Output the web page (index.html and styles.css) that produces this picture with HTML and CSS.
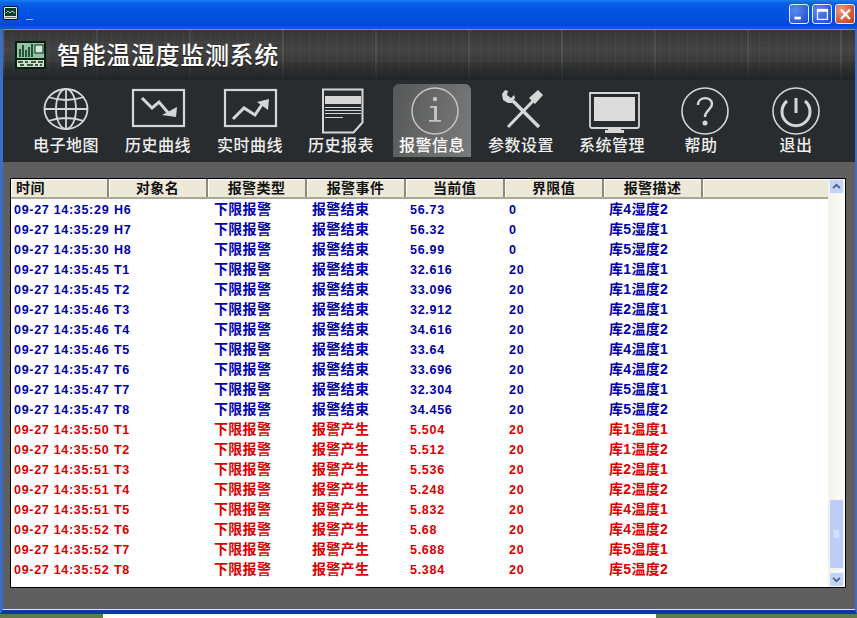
FILE: index.html
```html
<!DOCTYPE html>
<html lang="zh">
<head>
<meta charset="utf-8">
<title>智能温湿度监测系统</title>
<link rel="stylesheet" href="styles.css">
</head>
<body>
<div class="window">
  <div class="titlebar">
    <svg class="app-icon" viewBox="0 0 15 14"><rect x=".5" y=".5" width="14" height="13" rx="1.5" fill="#dfe8e0" stroke="#111"/><rect x="2" y="2" width="11" height="8" fill="#0d3a2c"/><path d="M3 7l2-2 2 2 2-2 3 2" fill="none" stroke="#9fe0b0"/><rect x="2" y="11" width="11" height="1" fill="#777"/></svg>
    <span class="title-text">_</span>
    <div class="win-buttons">
      <span class="win-btn"><svg viewBox="0 0 20 20"><rect x="5" y="13" width="7" height="3" fill="#fff"/></svg></span>
      <span class="win-btn"><svg viewBox="0 0 20 20"><rect x="5" y="5" width="11" height="11" fill="none" stroke="#fff" stroke-width="1.4"/><rect x="5" y="5" width="11" height="2.5" fill="#fff"/></svg></span>
      <span class="win-btn close"><svg viewBox="0 0 20 20"><path d="M5.5 5l10 10.500M15.500 5l-10 10.500" stroke="#fff" stroke-width="2.400" fill="none"/></svg></span>
    </div>
  </div>
  <div class="client">
    <header class="banner">
      <svg class="logo" viewBox="0 0 31 28">
        <rect width="31" height="28" fill="#06200f"/>
        <rect x="2" y="2" width="27" height="15" fill="#8fc4a4"/>
        <path d="M5 16V8M8 16V4M11 16V9M14 16V6M17 16V3" stroke="#0a2c18" stroke-width="1.500"/>
        <rect x="20" y="4" width="8" height="8" fill="#d6e8d8" stroke="#0a2c18"/>
        <rect x="2" y="19" width="27" height="7" fill="#cfe0c8"/>
        <path d="M3 21h5M10 21h3M16 21h5M23 21h5M5 24h4M12 24h6M20 24h3M25 24h2" stroke="#0a2c18" stroke-width="1.500"/>
      </svg>
      <h1 class="app-name">智能温湿度监测系统</h1>
    </header>
    <nav class="toolbar">
      <div class="tool">
        <svg class="ico" viewBox="0 0 60 50"><g fill="none" stroke="#d6d6d6" stroke-width="1.800"><ellipse cx="30" cy="23" rx="21.500" ry="20"/><ellipse cx="30" cy="23" rx="10" ry="20"/><path d="M30 3v40M8.500 23h43M12 11q18 6 36 0M12 35q18-6 36 0"/></g></svg>
        <span class="tool-label">电子地图</span>
      </div>
      <div class="tool">
        <svg class="ico" viewBox="0 0 60 50"><rect x="5" y="4" width="51" height="36" fill="none" stroke="#d6d6d6" stroke-width="2.200"/><path d="M14 12l10 10 7-6 11 13" fill="none" stroke="#d6d6d6" stroke-width="3"/><path d="M49 21l-1 10-14-2z" fill="#d6d6d6"/></svg>
        <span class="tool-label">历史曲线</span>
      </div>
      <div class="tool">
        <svg class="ico" viewBox="0 0 60 50"><rect x="5" y="4" width="51" height="36" fill="none" stroke="#d6d6d6" stroke-width="2.200"/><path d="M13 33l11-11 11 7 8-12" fill="none" stroke="#d6d6d6" stroke-width="3"/><path d="M49 13l-1 11-11-8z" fill="#d6d6d6"/></svg>
        <span class="tool-label">实时曲线</span>
      </div>
      <div class="tool">
        <svg class="ico" viewBox="0 0 60 50"><path d="M12 3.500h39.500v33l-9 10H12z" fill="none" stroke="#d6d6d6" stroke-width="2"/><rect x="14" y="10" width="36" height="8" fill="#d6d6d6"/><path d="M14 21.500h36M14 24.500h36M14 27.500h36" stroke="#d6d6d6"/><path d="M14 31.500h18" stroke="#d6d6d6"/></svg>
        <span class="tool-label">历史报表</span>
      </div>
      <div class="tool active">
        <svg class="ico" viewBox="0 0 60 50"><circle cx="33" cy="25" r="23" fill="none" stroke="#c4c4c4" stroke-width="1.500"/><circle cx="33" cy="13" r="2.200" fill="#c4c4c4"/><path d="M28 20h7v14h4v1.800H27V34h5V21.800h-4z" fill="#c4c4c4"/></svg>
        <span class="tool-label">报警信息</span>
      </div>
      <div class="tool">
        <svg class="ico" viewBox="0 0 60 50"><path d="M17 41L42 15" stroke="#d6d6d6" stroke-width="3"/><path d="M38 12l9-8 5 5-8 9z" fill="#d6d6d6"/><path d="M48 41L22 15" stroke="#d6d6d6" stroke-width="3.500"/><path d="M17 5l-1 4 4 3 3-3 1 3-3 5-4 0-5-3-1-6 3-4z" fill="#d6d6d6"/></svg>
        <span class="tool-label">参数设置</span>
      </div>
      <div class="tool">
        <svg class="ico" viewBox="0 0 60 50"><path d="M8 7h49v33a2 2 0 0 1-2 2H10a2 2 0 0 1-2-2z" fill="none" stroke="#d6d6d6" stroke-width="1.800"/><rect x="12" y="11" width="41" height="24" fill="#dcdcdc"/><path d="M26 42h13v2h3v3H23v-3h3z" fill="#d6d6d6"/></svg>
        <span class="tool-label">系统管理</span>
      </div>
      <div class="tool">
        <svg class="ico" viewBox="0 0 60 50"><circle cx="34" cy="25" r="23" fill="none" stroke="#d6d6d6" stroke-width="1.600"/><path d="M27 19c0-9 14-9 14-1 0 6-7 6-7 13" fill="none" stroke="#d6d6d6" stroke-width="2.400"/><circle cx="34" cy="37" r="2.500" fill="#d6d6d6"/></svg>
        <span class="tool-label">帮助</span>
      </div>
      <div class="tool">
        <svg class="ico" viewBox="0 0 60 50"><circle cx="30" cy="25" r="23" fill="none" stroke="#d6d6d6" stroke-width="1.600"/><path d="M21 15a14 14 0 1 0 18 0" fill="none" stroke="#d6d6d6" stroke-width="3"/><path d="M30 12v15" stroke="#d6d6d6" stroke-width="3"/></svg>
        <span class="tool-label">退出</span>
      </div>
    </nav>
    <main class="content">
      <section class="list">
        <div class="list-main">
          <div class="list-head">
            <span class="hc first">时间</span><span class="hc">对象名</span><span class="hc">报警类型</span><span class="hc">报警事件</span><span class="hc">当前值</span><span class="hc">界限值</span><span class="hc">报警描述</span><span class="hc rest"></span>
          </div>
          <div class="rows">
            <div class="row end"><span>09-27 14:35:29</span><span>H6</span><span>下限报警</span><span>报警结束</span><span>56.73</span><span>0</span><span>库4湿度2</span></div>
            <div class="row end"><span>09-27 14:35:29</span><span>H7</span><span>下限报警</span><span>报警结束</span><span>56.32</span><span>0</span><span>库5湿度1</span></div>
            <div class="row end"><span>09-27 14:35:30</span><span>H8</span><span>下限报警</span><span>报警结束</span><span>56.99</span><span>0</span><span>库5湿度2</span></div>
            <div class="row end"><span>09-27 14:35:45</span><span>T1</span><span>下限报警</span><span>报警结束</span><span>32.616</span><span>20</span><span>库1温度1</span></div>
            <div class="row end"><span>09-27 14:35:45</span><span>T2</span><span>下限报警</span><span>报警结束</span><span>33.096</span><span>20</span><span>库1温度2</span></div>
            <div class="row end"><span>09-27 14:35:46</span><span>T3</span><span>下限报警</span><span>报警结束</span><span>32.912</span><span>20</span><span>库2温度1</span></div>
            <div class="row end"><span>09-27 14:35:46</span><span>T4</span><span>下限报警</span><span>报警结束</span><span>34.616</span><span>20</span><span>库2温度2</span></div>
            <div class="row end"><span>09-27 14:35:46</span><span>T5</span><span>下限报警</span><span>报警结束</span><span>33.64</span><span>20</span><span>库4温度1</span></div>
            <div class="row end"><span>09-27 14:35:47</span><span>T6</span><span>下限报警</span><span>报警结束</span><span>33.696</span><span>20</span><span>库4温度2</span></div>
            <div class="row end"><span>09-27 14:35:47</span><span>T7</span><span>下限报警</span><span>报警结束</span><span>32.304</span><span>20</span><span>库5温度1</span></div>
            <div class="row end"><span>09-27 14:35:47</span><span>T8</span><span>下限报警</span><span>报警结束</span><span>34.456</span><span>20</span><span>库5温度2</span></div>
            <div class="row start"><span>09-27 14:35:50</span><span>T1</span><span>下限报警</span><span>报警产生</span><span>5.504</span><span>20</span><span>库1温度1</span></div>
            <div class="row start"><span>09-27 14:35:50</span><span>T2</span><span>下限报警</span><span>报警产生</span><span>5.512</span><span>20</span><span>库1温度2</span></div>
            <div class="row start"><span>09-27 14:35:51</span><span>T3</span><span>下限报警</span><span>报警产生</span><span>5.536</span><span>20</span><span>库2温度1</span></div>
            <div class="row start"><span>09-27 14:35:51</span><span>T4</span><span>下限报警</span><span>报警产生</span><span>5.248</span><span>20</span><span>库2温度2</span></div>
            <div class="row start"><span>09-27 14:35:51</span><span>T5</span><span>下限报警</span><span>报警产生</span><span>5.832</span><span>20</span><span>库4温度1</span></div>
            <div class="row start"><span>09-27 14:35:52</span><span>T6</span><span>下限报警</span><span>报警产生</span><span>5.68</span><span>20</span><span>库4温度2</span></div>
            <div class="row start"><span>09-27 14:35:52</span><span>T7</span><span>下限报警</span><span>报警产生</span><span>5.688</span><span>20</span><span>库5温度1</span></div>
            <div class="row start"><span>09-27 14:35:52</span><span>T8</span><span>下限报警</span><span>报警产生</span><span>5.384</span><span>20</span><span>库5温度2</span></div>
          </div>
        </div>
        <div class="scrollbar">
          <span class="sb-btn"><svg viewBox="0 0 15 15"><path d="M3.500 9.500l4-4 4 4" fill="none" stroke="#4d6185" stroke-width="2"/></svg></span>
          <span class="sb-track"></span>
          <span class="sb-thumb"><svg viewBox="0 0 13 8"><path d="M3.500 1h6M3.500 3h6M3.500 5h6M3.500 7h6" stroke="#eef3fd"/></svg></span>
          <span class="sb-btn"><svg viewBox="0 0 15 15"><path d="M3.500 5.500l4 4 4-4" fill="none" stroke="#4d6185" stroke-width="2"/></svg></span>
        </div>
      </section>
    </main>
  </div>
  <div class="desktop-strip"><span class="grass left"></span><span class="paper"></span><span class="grass"></span></div>
</div>
</body>
</html>
```

FILE: styles.css
```css
* { box-sizing: border-box; }
html, body { margin: 0; padding: 0; }
body { width: 857px; height: 618px; overflow: hidden; background: #fff; font-family: "Liberation Sans", "Noto Sans CJK SC", sans-serif; }
.window { width: 857px; height: 618px; display: flex; flex-direction: column; }

.titlebar { height: 29px; display: flex; align-items: center; padding: 0 2px 2px 3px; background: linear-gradient(#1a7ef0 0, #0a62e8 3px, #0456e4 8px, #0350de 18px, #0348d2 25px, #0a5ad8 28px); }
.app-icon { width: 15px; height: 14px; margin-top: -1px; }
.title-text { margin-left: 8px; color: #fff; font-size: 12px; line-height: 14px; font-weight: bold; }
.win-buttons { margin-left: auto; display: flex; gap: 3px; }
.win-btn { width: 20px; height: 20px; border: 1px solid #e8eefc; border-radius: 3px; background: radial-gradient(circle at 30% 30%, #5c8cf0, #2858d8 75%, #1c44b8); }
.win-btn svg { display: block; width: 18px; height: 18px; }
.win-btn.close { background: radial-gradient(circle at 30% 30%, #ec9a80, #d8502c 70%, #b83814); }

.client { flex: 1; min-height: 0; display: flex; flex-direction: column; border-left: 3px solid #3a6ec8; border-right: 2px solid #3a6ec8; border-bottom: 4px solid #0c3aa4; box-shadow: inset 0 -1px 0 #d8e6f8; background: #5f5f5f; }

.banner { height: 51px; flex: none; display: flex; align-items: center; padding-left: 12px; border-top: 1px solid #8a8a8a; background-color: #333; background-image:
  linear-gradient(rgba(32,36,38,0) 60%, rgba(32,36,38,.85) 100%),
  repeating-linear-gradient(90deg, rgba(255,255,255,.08) 0 2px, rgba(255,255,255,0) 2px 93px),
  repeating-linear-gradient(90deg, rgba(255,255,255,.025) 0 1px, rgba(0,0,0,.03) 1px 9px),
  repeating-linear-gradient(rgba(255,255,255,.02) 0 1px, rgba(0,0,0,.02) 1px 6px),
  linear-gradient(#383838, #464646 40%, #2c2c2c); }
.logo { width: 31px; height: 28px; flex: none; }
.app-name { margin: 2px 0 0 11px; font-size: 24px; line-height: 30px; font-weight: 500; letter-spacing: .65px; color: #fff; text-shadow: 0 1px 1px rgba(0,0,0,.6); }

.toolbar { height: 82px; flex: none; padding: 4px 0 0 17px; display: grid; grid-template-columns: 92px 92px 92px 90px 92px 86px 96px 82px 108px; background: #292c2e; }
.tool { width: 78px; height: 73px; justify-self: center; padding-top: 2px; display: flex; flex-direction: column; align-items: center; }
.tool.active { border-radius: 6px 6px 0 0; background: linear-gradient(105deg, #555857, #6b6e6d 60%, #7a7a7a 100%); }
.ico { display: block; width: 60px; height: 50px; flex: none; overflow: visible; }
.tool-label { font-size: 16px; line-height: 20px; font-weight: 500; color: #eee; white-space: nowrap; letter-spacing: .55px; }
.tool.active .tool-label { color: #fff; }

.content { flex: 1; min-height: 0; padding: 16px 9px 22px 7px; }
.list { height: 100%; display: flex; border: 1px solid #000; background: #fff; }
.list-main { flex: 1; min-width: 0; }
.list-head { height: 20px; display: flex; background: #ece9d8; border-bottom: 2px solid #aca899; }
.hc { width: 99px; height: 18px; text-align: center; font-size: 14px; line-height: 18px; font-weight: 700; color: #111; letter-spacing: .4px; border-right: 2px solid #8e8b7c; box-shadow: inset 1px 1px 0 #fff; }
.hc.first { width: 98px; padding-left: 5px; text-align: left; }
.hc.rest { flex: 1; border-right: 0; }

.rows { padding-top: 1px; }
.row { height: 20px; display: grid; grid-template-columns: 100px 100px 98px 98px 99px 100px auto; padding-left: 3px; align-items: center; font-size: 12.500px; line-height: 20px; font-weight: 700; letter-spacing: .7px; white-space: nowrap; }
.row span { margin-top: -1px; }
.row span:nth-child(3), .row span:nth-child(4), .row span:nth-child(7) { margin-top: -2px; font-size: 14px; letter-spacing: .3px; }
.row.end { color: #0000a8; }
.row.start { color: #d80000; }

.scrollbar { position: relative; width: 17px; flex: none; display: flex; flex-direction: column; background: linear-gradient(90deg, #f2f1ea, #fdfdfb); }
.sb-btn { width: 15px; height: 15px; margin-left: 1px; flex: none; border: 1px solid #eef2fc; border-radius: 2px; background: #c4d4f8; }
.sb-btn svg { display: block; width: 13px; height: 13px; }
.sb-track { flex: 1; }
.sb-thumb { position: absolute; left: 1px; bottom: 18px; width: 15px; height: 70px; display: flex; align-items: center; justify-content: center; border: 1px solid #eef2fc; border-radius: 2px; background: #bccef6; }
.sb-thumb svg { width: 13px; height: 8px; }

.desktop-strip { height: 4px; flex: none; display: flex; }
.grass { flex: 1; background: #5d7d46; }
.grass.left { flex: none; width: 103px; }
.paper { width: 553px; background: #fff; }
```
